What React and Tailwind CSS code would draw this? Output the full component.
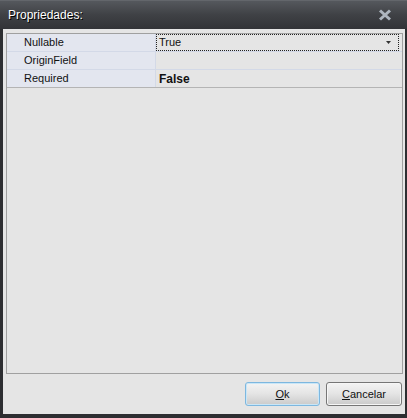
export default function App() {
  const rows = [
    { label: "Nullable", value: "True", focused: true },
    { label: "OriginField", value: "" },
    { label: "Required", value: "False", bold: true },
  ];

  return (
    <div
      className="w-[407px] h-[418px] bg-[#2d2e31] flex flex-col text-[11px] text-[#111]"
      style={{ fontFamily: '"Liberation Sans", Arial, sans-serif' }}
    >
      {/* Title bar */}
      <div className="h-[29px] shrink-0 flex items-center justify-between pl-[8px] pr-[15px] bg-gradient-to-b from-[#55585d] via-[#3f4145] to-[#323337] border-t border-[#63666b]">
        <span className="text-[12px] text-white [text-shadow:1px_1px_0_#000] -mt-[1px]">
          Propriedades:
        </span>
        <svg width="14" height="12" viewBox="0 0 14 12" className="-mt-[1px]">
          <path d="M2 1.5 L12 10.5 M12 1.5 L2 10.5" stroke="#aeb6bf" strokeWidth="3" />
        </svg>
      </div>

      {/* Body */}
      <div className="flex-1 ml-[3px] mr-[2px] mb-[4px] bg-[#e5e5e5] flex flex-col pl-[3px] pr-[2px] pt-[4px]">
        {/* Property grid */}
        <div className="h-[341px] border border-[#a0a0a0] bg-[#e5e5e5] flex flex-col">
          {rows.map((r, i) => (
            <div
              key={r.label}
              className={`h-[18px] flex border-b ${
                i === rows.length - 1 ? "border-[#b4b4b4]" : "border-[#d3d9e7]"
              }`}
            >
              <div className="w-[149px] bg-[#e3e6ef] border-r border-[#d3d9e7] flex items-center pl-[17px]">
                {r.label}
              </div>
              <div className="w-[245px] flex items-stretch">
                {r.focused ? (
                  <div className="flex-1 mr-[2px] border border-dotted border-[#222] flex items-center justify-between pl-[2px] pr-[7px]">
                    <span>{r.value}</span>
                    <svg width="5" height="3" viewBox="0 0 5 3">
                      <path d="M0 0 H5 L2.5 3 Z" fill="#333" />
                    </svg>
                  </div>
                ) : (
                  <div className={`flex-1 flex items-center pl-[3px] ${r.bold ? "font-bold text-[12px]" : ""}`}>
                    {r.value}
                  </div>
                )}
              </div>
            </div>
          ))}
        </div>

        {/* Buttons */}
        <div className="flex justify-end gap-[6px] mt-[8px] pr-[1px]">
          <button className="w-[75px] h-[24px] rounded-[3px] border border-[#7db7df] bg-gradient-to-b from-[#f4f4f4] via-[#e4e4e4] to-[#cacaca] flex items-center justify-center shadow-[inset_0_0_0_1px_#c9e6f7]">
            <span>
              <span className="underline">O</span>k
            </span>
          </button>
          <button className="w-[76px] h-[24px] rounded-[3px] border border-[#767676] bg-gradient-to-b from-[#f4f4f4] via-[#e4e4e4] to-[#cacaca] flex items-center justify-center shadow-[inset_0_0_0_1px_#f6f6f6]">
            <span>
              <span className="underline">C</span>ancelar
            </span>
          </button>
        </div>
      </div>
    </div>
  );
}
